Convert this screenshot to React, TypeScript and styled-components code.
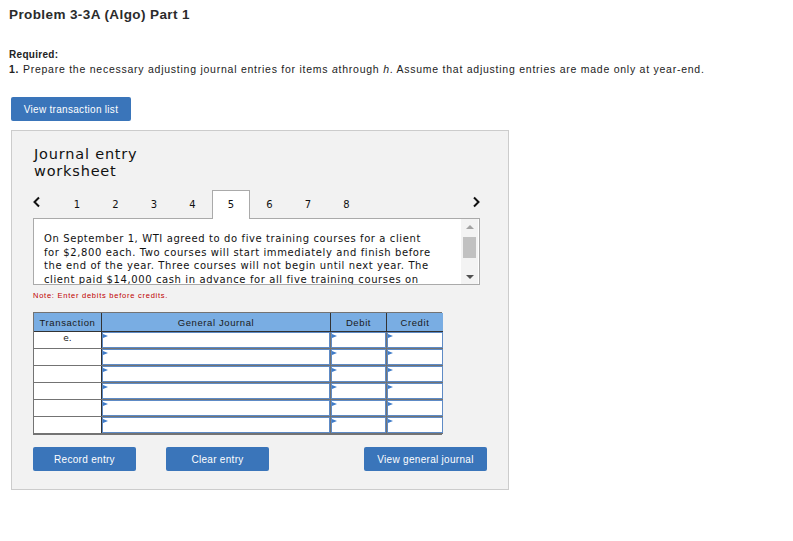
import React from "react";
import styled, { createGlobalStyle } from "styled-components";

const GlobalStyle = createGlobalStyle`
  body {
    margin: 0;
    background: #fff;
    font-family: "Liberation Sans", Arial, sans-serif;
    color: #222;
  }
`;

const Page = styled.div`
  width: 793px;
  height: 541px;
  padding: 7px 0 0 9px;
  box-sizing: border-box;
`;

const Title = styled.h1`
  margin: 0;
  font-size: 13.5px;
  font-weight: bold;
  color: #2b2b2b;
  line-height: 16px;
  letter-spacing: 0.4px;
`;

const Required = styled.div`
  margin-top: 25px;
  font-size: 10px;
  font-weight: bold;
  line-height: 14px;
  letter-spacing: 0.3px;
`;

const Instruction = styled.div`
  font-size: 10.5px;
  line-height: 14px;
  letter-spacing: 0.75px;
  b {
    font-weight: bold;
  }
  i {
    font-style: italic;
  }
`;

const BlueButton = styled.button<{ $w: number }>`
  width: ${(p) => p.$w}px;
  height: 24px;
  border: none;
  border-radius: 2px;
  background: #3a75ba;
  color: #fff;
  font-family: "Liberation Sans", Arial, sans-serif;
  font-size: 10px;
  letter-spacing: 0.3px;
  padding: 0;
  cursor: pointer;
`;

const TopButtonRow = styled.div`
  margin-top: 21px;
  margin-left: 2px;
`;

const Panel = styled.div`
  margin: 9px 0 0 2px;
  width: 498px;
  height: 360px;
  box-sizing: border-box;
  background: #f2f2f2;
  border: 1px solid #cccccc;
  padding: 15px 0 0 21px;
`;

const WorksheetTitle = styled.div`
  font-family: "DejaVu Sans", Verdana, sans-serif;
  font-size: 14.5px;
  line-height: 17px;
  letter-spacing: 0.8px;
  color: #111;
  width: 120px;
  margin-left: 1px;
`;

const TabRow = styled.div`
  display: flex;
  align-items: flex-end;
  height: 29px;
  margin-top: 10px;
  width: 447px;
  position: relative;
  z-index: 1;
`;

const Arrow = styled.div<{ $right?: boolean }>`
  width: ${(p) => (p.$right ? "auto" : "25px")};
  margin-left: ${(p) => (p.$right ? "auto" : "0")};
  height: 28px;
  display: flex;
  align-items: center;
  padding-bottom: 6px;
  box-sizing: border-box;
  svg {
    display: block;
  }
`;

const Tab = styled.div<{ $active?: boolean }>`
  width: 38px;
  height: 29px;
  box-sizing: border-box;
  display: flex;
  align-items: center;
  justify-content: center;
  padding-bottom: 2px;
  font-family: "DejaVu Sans", Verdana, sans-serif;
  font-size: 10px;
  color: #111;
  background: ${(p) => (p.$active ? "#fff" : "transparent")};
  border: 1px solid ${(p) => (p.$active ? "#aaa" : "transparent")};
  border-bottom: none;
  margin-right: 0.5px;
`;

const TextBox = styled.div`
  width: 447px;
  height: 67px;
  box-sizing: border-box;
  background: #fff;
  border: 1px solid #aaa;
  display: flex;
  margin-top: -1px;
  overflow: hidden;
`;

const TextContent = styled.div`
  flex: 1;
  height: 100%;
  box-sizing: border-box;
  overflow-y: auto;
  scrollbar-width: none;
  padding: 13px 27px 0 10px;
  font-family: "DejaVu Sans", Verdana, sans-serif;
  font-size: 10px;
  line-height: 13.5px;
  letter-spacing: 0.6px;
  color: #111;
`;

const ScrollTrack = styled.div`
  width: 17px;
  display: flex;
  flex-direction: column;
  align-items: center;
  padding: 6px 0 5px;
  box-sizing: border-box;
  background: #f3f3f3;
  margin-right: 1px;
`;

const Thumb = styled.div`
  width: 13px;
  height: 21px;
  background: #c1c1c1;
  margin-top: 8px;
  margin-bottom: auto;
`;

const ArrowTri = styled.div<{ $down?: boolean }>`
  width: 0;
  height: 0;
  border-left: 4px solid transparent;
  border-right: 4px solid transparent;
  ${(p) =>
    p.$down
      ? "border-top: 4px solid #505050;"
      : "border-bottom: 4px solid #a3a3a3;"}
`;

const Note = styled.div`
  margin-top: 6px;
  font-size: 7.5px;
  letter-spacing: 0.75px;
  color: #c00000;
  line-height: 10px;
`;

const Table = styled.div`
  margin-top: 11px;
  width: 409px;
  display: grid;
  grid-template-columns: 68px 229px 56px 56px;
  border: 1px solid #737373;
  box-sizing: border-box;
`;

const HeadCell = styled.div<{ $last?: boolean }>`
  height: 18px;
  background: #79ade3;
  border-right: ${(p) => (p.$last ? "none" : "1px solid #333")};
  border-bottom: 1px solid #333;
  display: flex;
  align-items: center;
  justify-content: center;
  font-size: 9.5px;
  color: #1a1a1a;
  letter-spacing: 0.6px;
`;

const TxCell = styled.div`
  height: 16px;
  box-sizing: border-box;
  border-right: 1px solid #333;
  background: #fff;
  font-family: "DejaVu Sans", Verdana, sans-serif;
  font-size: 9px;
  display: flex;
  justify-content: center;
  align-items: flex-start;
  padding-top: 1px;
  box-shadow: 0 1px 0 #737373;
  margin-bottom: 1px;
`;

const InputCell = styled.div<{ $last?: boolean }>`
  height: 16px;
  border-right: ${(p) => (p.$last ? "none" : "1px solid #737373")};
  border-bottom: 1px solid #737373;
  background: #fff;
  position: relative;
  &::before {
    content: "";
    position: absolute;
    inset: 0;
    border: 1px solid #5e8bc6;
  }
  &::after {
    content: "";
    position: absolute;
    left: 1px;
    top: 2px;
    width: 0;
    height: 0;
    border-top: 2.5px solid transparent;
    border-bottom: 2.5px solid transparent;
    border-left: 5px solid #3f7cc9;
  }
`;

const ButtonRow = styled.div`
  display: flex;
  margin-top: 12px;
  width: 454px;
  gap: 30px;
  & > :last-child {
    margin-left: auto;
  }
`;

const Chevron = ({ right }: { right?: boolean }) => (
  <svg width="8" height="12" viewBox="0 0 8 12">
    <path
      d={right ? "M2 1.5 L6.5 6 L2 10.5" : "M6 1.5 L1.5 6 L6 10.5"}
      fill="none"
      stroke="#111"
      strokeWidth="2"
    />
  </svg>
);

const tabs = [1, 2, 3, 4, 5, 6, 7, 8];
const rows = ["e.", "", "", "", "", ""];

export default function App() {
  return (
    <Page>
      <GlobalStyle />
      <Title>Problem 3-3A (Algo) Part 1</Title>
      <Required>Required:</Required>
      <Instruction>
        <b>1.</b> Prepare the necessary adjusting journal entries for items{" "}
        <i>a</i>through <i>h</i>. Assume that adjusting entries are made only
        at year-end.
      </Instruction>
      <TopButtonRow>
        <BlueButton $w={120}>View transaction list</BlueButton>
      </TopButtonRow>
      <Panel>
        <WorksheetTitle>Journal entry worksheet</WorksheetTitle>
        <TabRow>
          <Arrow>
            <Chevron />
          </Arrow>
          {tabs.map((t) => (
            <Tab key={t} $active={t === 5}>
              {t}
            </Tab>
          ))}
          <Arrow $right>
            <Chevron right />
          </Arrow>
        </TabRow>
        <TextBox>
          <TextContent>
            On September 1, WTI agreed to do five training courses for a client
            for $2,800 each. Two courses will start immediately and finish
            before the end of the year. Three courses will not begin until next
            year. The client paid $14,000 cash in advance for all five training
            courses on September 1.
          </TextContent>
          <ScrollTrack>
            <ArrowTri />
            <Thumb />
            <ArrowTri $down />
          </ScrollTrack>
        </TextBox>
        <Note>Note: Enter debits before credits.</Note>
        <Table>
          <HeadCell>Transaction</HeadCell>
          <HeadCell>General Journal</HeadCell>
          <HeadCell>Debit</HeadCell>
          <HeadCell $last>Credit</HeadCell>
          {rows.map((r, i) => (
            <React.Fragment key={i}>
              <TxCell>{r}</TxCell>
              <InputCell />
              <InputCell />
              <InputCell $last />
            </React.Fragment>
          ))}
        </Table>
        <ButtonRow>
          <BlueButton $w={103}>Record entry</BlueButton>
          <BlueButton $w={103}>Clear entry</BlueButton>
          <BlueButton $w={123}>View general journal</BlueButton>
        </ButtonRow>
      </Panel>
    </Page>
  );
}
